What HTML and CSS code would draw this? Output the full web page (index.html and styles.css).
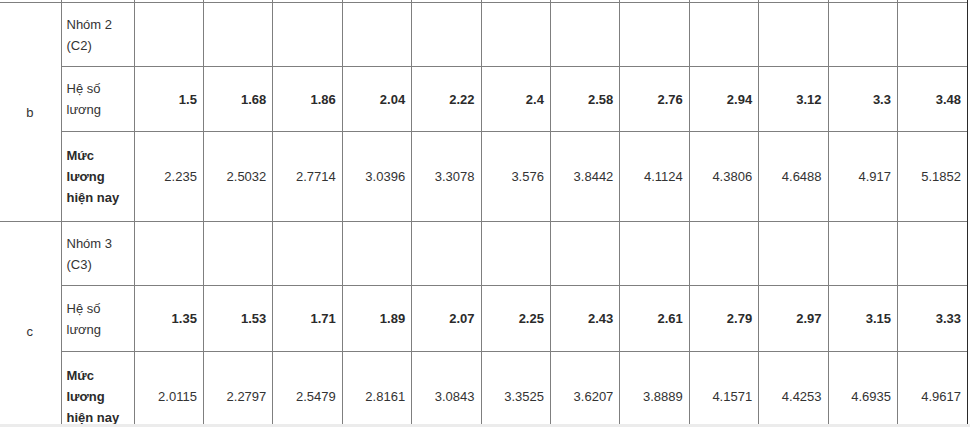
FILE: index.html
```html
<!DOCTYPE html>
<html lang="vi">
<head>
<meta charset="utf-8">
<title>Bảng lương</title>
<link rel="stylesheet" href="styles.css">
</head>
<body>
<div class="frame">
<table class="salary">
<colgroup>
<col class="c-grp"><col class="c-lbl">
<col><col><col><col><col><col><col><col><col><col><col><col>
</colgroup>
<tbody>
<tr class="r-cut"><td class="edge"></td><td></td><td></td><td></td><td></td><td></td><td></td><td></td><td></td><td></td><td></td><td></td><td></td><td class="last"></td></tr>

<tr class="r-name">
<td class="edge grp" rowspan="3">b</td>
<td class="lbl">Nhóm 2 (C2)</td>
<td></td><td></td><td></td><td></td><td></td><td></td><td></td><td></td><td></td><td></td><td></td><td class="last"></td>
</tr>
<tr class="r-coef">
<td class="lbl">Hệ số lương</td>
<td class="num b">1.5</td><td class="num b">1.68</td><td class="num b">1.86</td><td class="num b">2.04</td><td class="num b">2.22</td><td class="num b">2.4</td><td class="num b">2.58</td><td class="num b">2.76</td><td class="num b">2.94</td><td class="num b">3.12</td><td class="num b">3.3</td><td class="num b last">3.48</td>
</tr>
<tr class="r-pay">
<td class="lbl b">Mức lương hiện nay</td>
<td class="num">2.235</td><td class="num">2.5032</td><td class="num">2.7714</td><td class="num">3.0396</td><td class="num">3.3078</td><td class="num">3.576</td><td class="num">3.8442</td><td class="num">4.1124</td><td class="num">4.3806</td><td class="num">4.6488</td><td class="num">4.917</td><td class="num last">5.1852</td>
</tr>

<tr class="r-name">
<td class="edge grp" rowspan="3">c</td>
<td class="lbl">Nhóm 3 (C3)</td>
<td></td><td></td><td></td><td></td><td></td><td></td><td></td><td></td><td></td><td></td><td></td><td class="last"></td>
</tr>
<tr class="r-coef2">
<td class="lbl">Hệ số lương</td>
<td class="num b">1.35</td><td class="num b">1.53</td><td class="num b">1.71</td><td class="num b">1.89</td><td class="num b">2.07</td><td class="num b">2.25</td><td class="num b">2.43</td><td class="num b">2.61</td><td class="num b">2.79</td><td class="num b">2.97</td><td class="num b">3.15</td><td class="num b last">3.33</td>
</tr>
<tr class="r-pay">
<td class="lbl b">Mức lương hiện nay</td>
<td class="num">2.0115</td><td class="num">2.2797</td><td class="num">2.5479</td><td class="num">2.8161</td><td class="num">3.0843</td><td class="num">3.3525</td><td class="num">3.6207</td><td class="num">3.8889</td><td class="num">4.1571</td><td class="num">4.4253</td><td class="num">4.6935</td><td class="num last">4.9617</td>
</tr>
</tbody>
</table>
</div>
<div class="band"></div>
</body>
</html>
```

FILE: styles.css
```css
html, body {
  margin: 0;
  padding: 0;
  background: #ffffff;
}
body {
  font-family: "Liberation Sans", Arial, sans-serif;
  font-size: 13px;
  line-height: 21px;
  color: #333333;
  width: 970px;
  height: 427px;
  overflow: hidden;
}
.frame {
  width: 967px;
  height: 424px;
  overflow: hidden;
  border-right: 1px solid #2a2a2a;
}
.band {
  height: 3px;
  background: #ececec;
}
.salary {
  border-collapse: collapse;
  table-layout: fixed;
  width: 967px;
}
.c-grp { width: 61px; }
.c-lbl { width: 73px; }
.salary td {
  border: 1px solid #7f7f7f;
  padding: 0 6px 0 5px;
  vertical-align: middle;
  overflow: hidden;
}
.salary td.edge { border-left: 0; }
.salary td.last { border-right: 0; }
.r-cut td {
  border-top: 0;
  height: 2px;
  padding: 0;
  line-height: 0;
}
.r-name { height: 64px; }
.r-coef { height: 65px; }
.r-pay { height: 90px; }
.r-coef2 { height: 66px; }
.grp { text-align: center; }
.lbl { text-align: left; }
.num { text-align: right; }
.b { font-weight: bold; color: #2b2b2b; }
```
